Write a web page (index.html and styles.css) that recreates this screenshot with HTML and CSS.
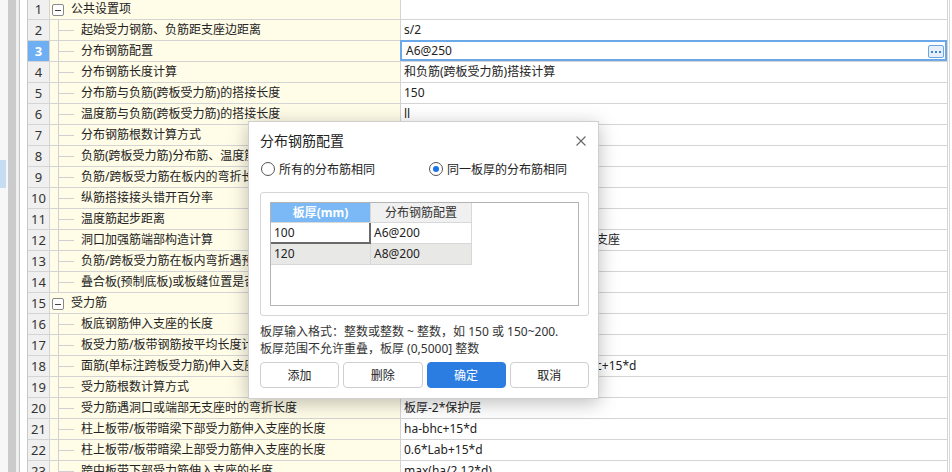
FILE: index.html
```html
<!DOCTYPE html>
<html lang="zh-CN">
<head>
<meta charset="utf-8">
<title>分布钢筋配置</title>
<link rel="stylesheet" href="styles.css">
</head>
<body>
<div class="app">
  <div class="sidebar">
    <div class="sb-a"><div class="sb-sel"></div></div>
    <div class="sb-b"></div>
    <div class="sb-c"></div>
    <div class="sb-line"></div>
    <div class="sb-d"></div>
  </div>
  <div class="grid">
    <div class="num">1</div><div class="tree"><span class="box"></span><span class="grp">公共设置项</span></div><div class="val"></div>
    <div class="num">2</div><div class="tree"><span class="conn"></span>起始受力钢筋、负筋距支座边距离</div><div class="val">s/2</div>
    <div class="num sel">3</div><div class="tree"><span class="conn"></span>分布钢筋配置</div><div class="val editing"><span>A6@250</span><span class="ell"><i></i><i></i><i></i></span></div>
    <div class="num">4</div><div class="tree"><span class="conn"></span>分布钢筋长度计算</div><div class="val">和负筋(跨板受力筋)搭接计算</div>
    <div class="num">5</div><div class="tree"><span class="conn"></span>分布筋与负筋(跨板受力筋)的搭接长度</div><div class="val">150</div>
    <div class="num">6</div><div class="tree"><span class="conn"></span>温度筋与负筋(跨板受力筋)的搭接长度</div><div class="val">ll</div>
    <div class="num">7</div><div class="tree"><span class="conn"></span>分布钢筋根数计算方式</div><div class="val">向上取整+1</div>
    <div class="num">8</div><div class="tree"><span class="conn"></span>负筋(跨板受力筋)分布筋、温度筋是否连通</div><div class="val">是</div>
    <div class="num">9</div><div class="tree"><span class="conn"></span>负筋/跨板受力筋在板内的弯折长度</div><div class="val">板厚-2*保护层</div>
    <div class="num">10</div><div class="tree"><span class="conn"></span>纵筋搭接接头错开百分率</div><div class="val">50%</div>
    <div class="num">11</div><div class="tree"><span class="conn"></span>温度筋起步距离</div><div class="val">s</div>
    <div class="num">12</div><div class="tree"><span class="conn"></span>洞口加强筋端部构造计算</div><div class="val">设计有加强筋时，端部按图集锚固入支座</div>
    <div class="num">13</div><div class="tree"><span class="conn"></span>负筋/跨板受力筋在板内弯折遇预制底板时处理</div><div class="val">不考虑</div>
    <div class="num">14</div><div class="tree"><span class="conn"></span>叠合板(预制底板)或板缝位置是否设置附加筋</div><div class="val">是</div>
    <div class="num">15</div><div class="tree"><span class="box"></span><span class="grp">受力筋</span></div><div class="val"></div>
    <div class="num">16</div><div class="tree"><span class="conn"></span>板底钢筋伸入支座的长度</div><div class="val">max(ha/2,5*d)</div>
    <div class="num">17</div><div class="tree"><span class="conn"></span>板受力筋/板带钢筋按平均长度计算</div><div class="val">否</div>
    <div class="num">18</div><div class="tree"><span class="conn"></span>面筋(单标注跨板受力筋)伸入支座的锚固长度</div><div class="val">直锚就直锚，否则按公式计算:ha-bhc+15*d</div>
    <div class="num">19</div><div class="tree"><span class="conn"></span>受力筋根数计算方式</div><div class="val">向上取整+1</div>
    <div class="num">20</div><div class="tree"><span class="conn"></span>受力筋遇洞口或端部无支座时的弯折长度</div><div class="val">板厚-2*保护层</div>
    <div class="num">21</div><div class="tree"><span class="conn"></span>柱上板带/板带暗梁下部受力筋伸入支座的长度</div><div class="val">ha-bhc+15*d</div>
    <div class="num">22</div><div class="tree"><span class="conn"></span>柱上板带/板带暗梁上部受力筋伸入支座的长度</div><div class="val">0.6*Lab+15*d</div>
    <div class="num">23</div><div class="tree"><span class="conn"></span>跨中板带下部受力筋伸入支座的长度</div><div class="val">max(ha/2,12*d)</div>
  </div>
  <div class="rstrip"></div>
</div>

<div class="dialog">
  <div class="dlg-title">
    <span>分布钢筋配置</span>
    <svg class="close" width="10" height="10" viewBox="0 0 10 10"><path d="M0.5 0.5 L9.5 9.5 M9.5 0.5 L0.5 9.5" stroke="#666" stroke-width="1.1" fill="none"/></svg>
  </div>
  <div class="radios">
    <label class="radio first"><span class="rc"></span>所有的分布筋相同</label>
    <label class="radio"><span class="rc on"></span>同一板厚的分布筋相同</label>
  </div>
  <div class="groupbox">
    <div class="listbox">
      <div class="tbl">
        <div class="th th-sel">板厚(mm)</div><div class="th">分布钢筋配置</div>
        <div class="td td-edit">100</div><div class="td">A6@200</div>
        <div class="td td-alt">120</div><div class="td td-alt">A8@200</div>
      </div>
    </div>
  </div>
  <div class="hint">板厚输入格式：整数或整数 ~ 整数，如 150 或 150~200.<br>板厚范围不允许重叠，板厚 (0,5000] 整数</div>
  <div class="btns">
    <button class="btn">添加</button>
    <button class="btn">删除</button>
    <button class="btn primary">确定</button>
    <button class="btn">取消</button>
  </div>
</div>
</body>
</html>
```

FILE: styles.css
```css
* { box-sizing: border-box; }

body {
  margin: 0;
  width: 952px;
  height: 472px;
  overflow: hidden;
  background: #fff;
  font-family: "Noto Sans", "Noto Sans CJK SC", sans-serif;
  font-size: 12px;
  color: #222;
}

.app {
  display: flex;
  height: 472px;
}

.sidebar {
  display: flex;
  width: 27px;
  flex: none;
}
.sb-a { width: 8px; background: #f7f7f7; }
.sb-sel { width: 6px; height: 28px; margin-top: 160px; background: #c6dcf2; }
.sb-b { width: 8px; background: #cbcbcb; }
.sb-c { width: 3px; background: #efefef; }
.sb-line { width: 1px; background: #c4c4c4; }
.sb-d { width: 7px; background: #fff; }

.grid {
  display: grid;
  grid-template-columns: 22px 351px 547px;
  grid-auto-rows: 21px;
  align-content: start;
  margin-top: -1px;
  border-left: 1px solid #c8c8c8;
  flex: none;
}

.grid > div {
  border-right: 1px solid #d4d4d4;
  border-bottom: 1px solid #d4d4d4;
  line-height: 20px;
  white-space: nowrap;
  overflow: hidden;
}

.num {
  background: #f0f0f0;
  text-align: center;
  font-size: 13px;
  color: #333;
  border-color: #d0d0d0;
}
.num.sel {
  background: #6eaef2;
  color: #fff;
  font-weight: bold;
}

.tree {
  background: #fffce8;
  display: flex;
  align-items: stretch;
}

.conn {
  width: 31px;
  flex: none;
  background:
    linear-gradient(#d0d0d0, #d0d0d0) 8px 0 / 1px 100% no-repeat,
    linear-gradient(#d0d0d0, #d0d0d0) 9px 10px / 15px 1px no-repeat;
}

.box {
  width: 12px;
  height: 12px;
  margin: 5px 0 0 2px;
  flex: none;
  border: 1px solid #8a8a8a;
  border-radius: 2px;
  background:
    linear-gradient(#444, #444) 2px 5px / 6px 1px no-repeat,
    #fff;
}
.grp { margin-left: 7px; }

.val {
  padding-left: 3px;
  background: #fff;
}
.grid > .val.editing {
  position: relative;
  overflow: visible;
  display: flex;
  justify-content: space-between;
  align-items: center;
  padding-left: 5px;
  padding-right: 3px;
}
.val.editing::after {
  content: "";
  position: absolute;
  top: -1px;
  left: -1px;
  right: 0;
  bottom: 0;
  border: 2px solid #6aa8e8;
  pointer-events: none;
}
.ell {
  width: 16px;
  height: 13px;
  border: 1px solid #6aa8e8;
  border-radius: 2px;
  background: #e8eef8;
  display: flex;
  justify-content: center;
  align-items: center;
  gap: 2px;
  margin-top: 1px;
}
.ell i {
  width: 2px;
  height: 2px;
  background: #3b86dd;
}

.rstrip {
  flex: 1;
  background:
    linear-gradient(#d8d8d8, #d8d8d8) 1px 0 / 1px 100% no-repeat,
    #fff;
}

/* dialog */
.dialog {
  position: absolute;
  left: 248px;
  top: 121px;
  width: 351px;
  height: 278px;
  background: #fff;
  border: 1px solid #cfcfcf;
  box-shadow: 0 4px 18px rgba(0, 0, 0, 0.26);
  padding: 0 9px 10px 11px;
  display: flex;
  flex-direction: column;
  color: #222;
}

.dlg-title {
  height: 36px;
  display: flex;
  align-items: center;
  justify-content: space-between;
  font-size: 14px;
}
.close { margin-right: 3px; margin-top: 1px; }

.radios {
  height: 22px;
  display: flex;
  align-items: center;
}
.radio {
  display: flex;
  align-items: center;
  gap: 4px;
}
.radio.first {
  width: 168px;
  margin-left: 1px;
}
.rc {
  width: 14px;
  height: 14px;
  border: 1px solid #555;
  border-radius: 50%;
  background: #fff;
  display: flex;
  align-items: center;
  justify-content: center;
}
.rc.on::before {
  content: "";
  width: 6px;
  height: 6px;
  border-radius: 50%;
  background: #1a73e8;
}

.groupbox {
  margin-top: 12px;
  height: 124px;
  border: 1px solid #d6d6d6;
  border-radius: 3px;
  padding: 9px;
}
.listbox {
  height: 104px;
  border: 1px solid #b4b4b4;
  background: #fff;
}
.tbl {
  display: grid;
  grid-template-columns: 100px 101px;
  grid-template-rows: 20px 21px 21px;
  width: 201px;
}
.th, .td {
  border-right: 1px solid #d8d8d8;
  border-bottom: 1px solid #d8d8d8;
  line-height: 20px;
  padding-left: 3px;
}
.th {
  background: #f0f0f0;
  text-align: center;
  padding-left: 0;
  color: #333;
  line-height: 19px;
}
.th-sel {
  background: #7ab8f6;
  color: #fff;
  font-weight: bold;
}
.td-edit {
  border-right: 2px solid #6a6a6a;
  border-bottom: 2px solid #6a6a6a;
}
.td-alt {
  background: #e8e8e6;
}

.hint {
  margin-top: 7px;
  line-height: 17px;
  color: #333;
}

.btns {
  margin-top: 5px;
  display: flex;
  gap: 4px;
}
.btn {
  flex: 1;
  height: 26px;
  border: 1px solid #cfcfcf;
  border-radius: 4px;
  background: #fff;
  font-family: "Noto Sans", "Noto Sans CJK SC", sans-serif;
  font-size: 12px;
  color: #222;
  padding: 0;
}
.btn.primary {
  background: #2b7de1;
  border-color: #2b7de1;
  color: #fff;
}
```
